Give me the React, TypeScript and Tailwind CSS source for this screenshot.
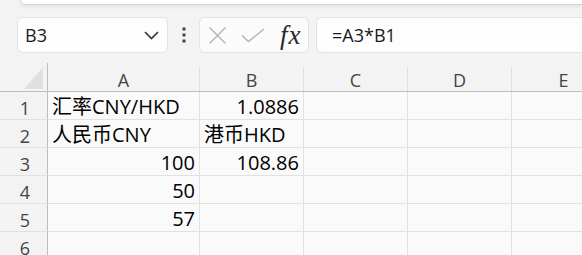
const columns = [
  { label: 'A', w: 'w-[152px]' },
  { label: 'B', w: 'w-[104px]' },
  { label: 'C', w: 'w-[104px]' },
  { label: 'D', w: 'w-[104px]' },
  { label: 'E', w: 'w-[104px]' },
]

type Cell = { text: string; right?: boolean }

const rows: Cell[][] = [
  [{ text: '汇率CNY/HKD' }, { text: '1.0886', right: true }],
  [{ text: '人民币CNY' }, { text: '港币HKD' }],
  [{ text: '100', right: true }, { text: '108.86', right: true }],
  [{ text: '50', right: true }],
  [{ text: '57', right: true }],
  [],
]

function Toolbar() {
  return (
    <div className="mt-[12px] flex h-[36px] items-center">
      <div className="ml-[17px] flex h-[36px] w-[151px] items-center justify-between rounded-[6px] border border-[#e3e3e3] bg-[#fdfdfd] pl-[7px] pr-[8px]">
        <span className="text-[18px] leading-[24px] text-[#1a1a1a]">B3</span>
        <svg width="15" height="9" viewBox="0 0 15 9" fill="none">
          <path d="M1 1l6.5 6.5L14 1" stroke="#333" strokeWidth="1.6" />
        </svg>
      </div>
      <div className="flex w-[31px] justify-center">
        <svg width="4" height="16" viewBox="0 0 4 16">
          <rect x="0.5" y="0.5" width="3" height="3" fill="#444" />
          <rect x="0.5" y="6.5" width="3" height="3" fill="#444" />
          <rect x="0.5" y="12.5" width="3" height="3" fill="#444" />
        </svg>
      </div>
      <div className="flex h-[36px] w-[110px] items-center rounded-[6px] border border-[#e3e3e3] bg-[#fbfbfb] pl-[8px]">
        <svg width="19" height="19" viewBox="0 0 19 19" fill="none">
          <path d="M1.5 1.5l16 16M17.5 1.5l-16 16" stroke="#b4b4b4" strokeWidth="1.4" />
        </svg>
        <svg className="ml-[14px]" width="24" height="15" viewBox="0 0 24 15" fill="none">
          <path d="M1 7.5l6.5 6L23 1" stroke="#b4b4b4" strokeWidth="1.4" />
        </svg>
        <span className="ml-[15px] font-['Liberation_Serif',serif] text-[27px] italic leading-[24px] tracking-[1px] text-[#2a2a2a]">
          fx
        </span>
      </div>
      <div className="ml-[7px] flex h-[36px] flex-1 items-center rounded-l-[6px] border border-r-0 border-[#e3e3e3] bg-[#fdfdfd] pl-[15px]">
        <span className="text-[18px] leading-[24px] text-[#1a1a1a]">=A3*B1</span>
      </div>
    </div>
  )
}

function HeaderRow() {
  return (
    <div className="mt-[10px] flex h-[29px] border-b border-[#bdbdbd]">
      <div className="flex w-[48px] shrink-0 items-end justify-end border-r border-[#bdbdbd] pb-[2px] pr-[4px]">
        <svg width="19" height="22" viewBox="0 0 19 22">
          <path d="M19 0L0 22H19Z" fill="#e0e0e0" />
        </svg>
      </div>
      {columns.map((c) => (
        <div
          key={c.label}
          className={`${c.w} mt-[4px] shrink-0 border-r border-[#e1e1e1] text-center text-[18px] leading-[27px] text-[#444]`}
        >
          {c.label}
        </div>
      ))}
    </div>
  )
}

export default function App() {
  return (
    <div className="h-[255px] w-[582px] overflow-hidden bg-[#f3f3f3] font-['Open_Sans','Noto_Sans_CJK_SC',sans-serif]">
      <div className="ml-[20px] h-[5px] rounded-bl-[6px] border-b border-l border-[#d4d4d4] bg-white shadow-[0_2px_4px_rgba(0,0,0,0.06)]" />
      <Toolbar />
      <HeaderRow />
      {rows.map((r, i) => (
        <div key={i} className="flex h-[28px]">
          <div className="w-[48px] shrink-0 border-r border-b border-r-[#bdbdbd] border-b-[#e1e1e1] bg-[#f3f3f3] pl-[3px] text-center text-[18px] leading-[32px] text-[#444]">
            {i + 1}
          </div>
          {columns.map((c, j) => {
            const cell = r[j]
            return (
              <div
                key={c.label}
                className={`${c.w} shrink-0 overflow-hidden whitespace-nowrap border-r border-b border-[#e1e1e1] bg-[#fafafa] px-[4px] text-[20px] leading-[29px] text-black ${
                  cell?.right ? 'text-right' : 'text-left'
                }`}
              >
                {cell?.text}
              </div>
            )
          })}
        </div>
      ))}
    </div>
  )
}
